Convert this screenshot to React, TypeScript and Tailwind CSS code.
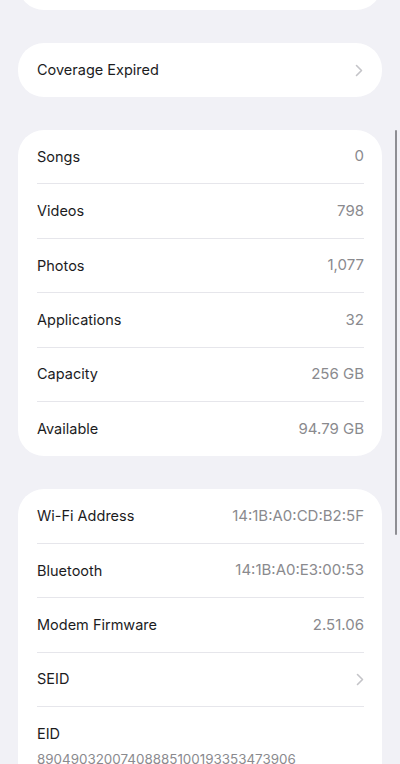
import React from "react";

type Row = { label: string; value?: string; chevron?: boolean };

const mediaRows: Row[] = [
  { label: "Songs", value: "0" },
  { label: "Videos", value: "798" },
  { label: "Photos", value: "1,077" },
  { label: "Applications", value: "32" },
  { label: "Capacity", value: "256 GB" },
  { label: "Available", value: "94.79 GB" },
];

const networkRows: Row[] = [
  { label: "Wi-Fi Address", value: "14:1B:A0:CD:B2:5F" },
  { label: "Bluetooth", value: "14:1B:A0:E3:00:53" },
  { label: "Modem Firmware", value: "2.51.06" },
  { label: "SEID", chevron: true },
];

function Chevron() {
  return (
    <svg width="8" height="13" viewBox="0 0 8 13" fill="none" className="shrink-0">
      <path d="M1.5 1.5L6.5 6.5L1.5 11.5" stroke="#c4c4c8" strokeWidth="1.6" strokeLinecap="round" strokeLinejoin="round" />
    </svg>
  );
}

function SettingsRow({ row, last }: { row: Row; last?: boolean }) {
  return (
    <div className="pl-[19px] pr-[18px]">
      <div
        className={`flex h-[54.4px] items-center justify-between ${last ? "" : "border-b border-[#e6e6eb]"}`}
      >
        <span className="text-[14.5px] text-[#1c1c1e]">{row.label}</span>
        {row.chevron ? <Chevron /> : <span className="text-[15px] text-[#8a8a8e]">{row.value}</span>}
      </div>
    </div>
  );
}

export default function App() {
  return (
    <div
      className="relative h-[764px] w-[400px] overflow-hidden bg-[#f1f1f6]"
      style={{ fontFamily: "Inter, 'Noto Sans', sans-serif" }}
    >
      <div className="flex flex-col gap-[33px] px-[18px]">
        {/* tail of the card above */}
        <div className="-mt-[50px] h-[60px] rounded-[26px] bg-white" />

        <div className="rounded-[26px] bg-white">
          <div className="flex h-[54px] items-center justify-between pl-[19px] pr-[19px]">
            <span className="text-[14.5px] text-[#1c1c1e]">Coverage Expired</span>
            <Chevron />
          </div>
        </div>

        <div className="rounded-[26px] bg-white">
          {mediaRows.map((row, i) => (
            <SettingsRow key={row.label} row={row} last={i === mediaRows.length - 1} />
          ))}
        </div>

        <div className="rounded-[26px] bg-white">
          {networkRows.map((row) => (
            <SettingsRow key={row.label} row={row} />
          ))}
          <div className="pl-[19px] pr-[18px] pt-[17px]">
            <p className="text-[14.5px] leading-[20px] text-[#1c1c1e]">EID</p>
            <p className="mt-[5px] text-[13.4px] leading-[20px] text-[#8a8a8e]">89049032007408885100193353473906</p>
          </div>
          <div className="h-[40px]" />
        </div>
      </div>

      {/* scroll indicator */}
      <div className="absolute right-[3px] top-[130px] h-[405px] w-[2.5px] rounded-full bg-[#8e8e93]" />
    </div>
  );
}
